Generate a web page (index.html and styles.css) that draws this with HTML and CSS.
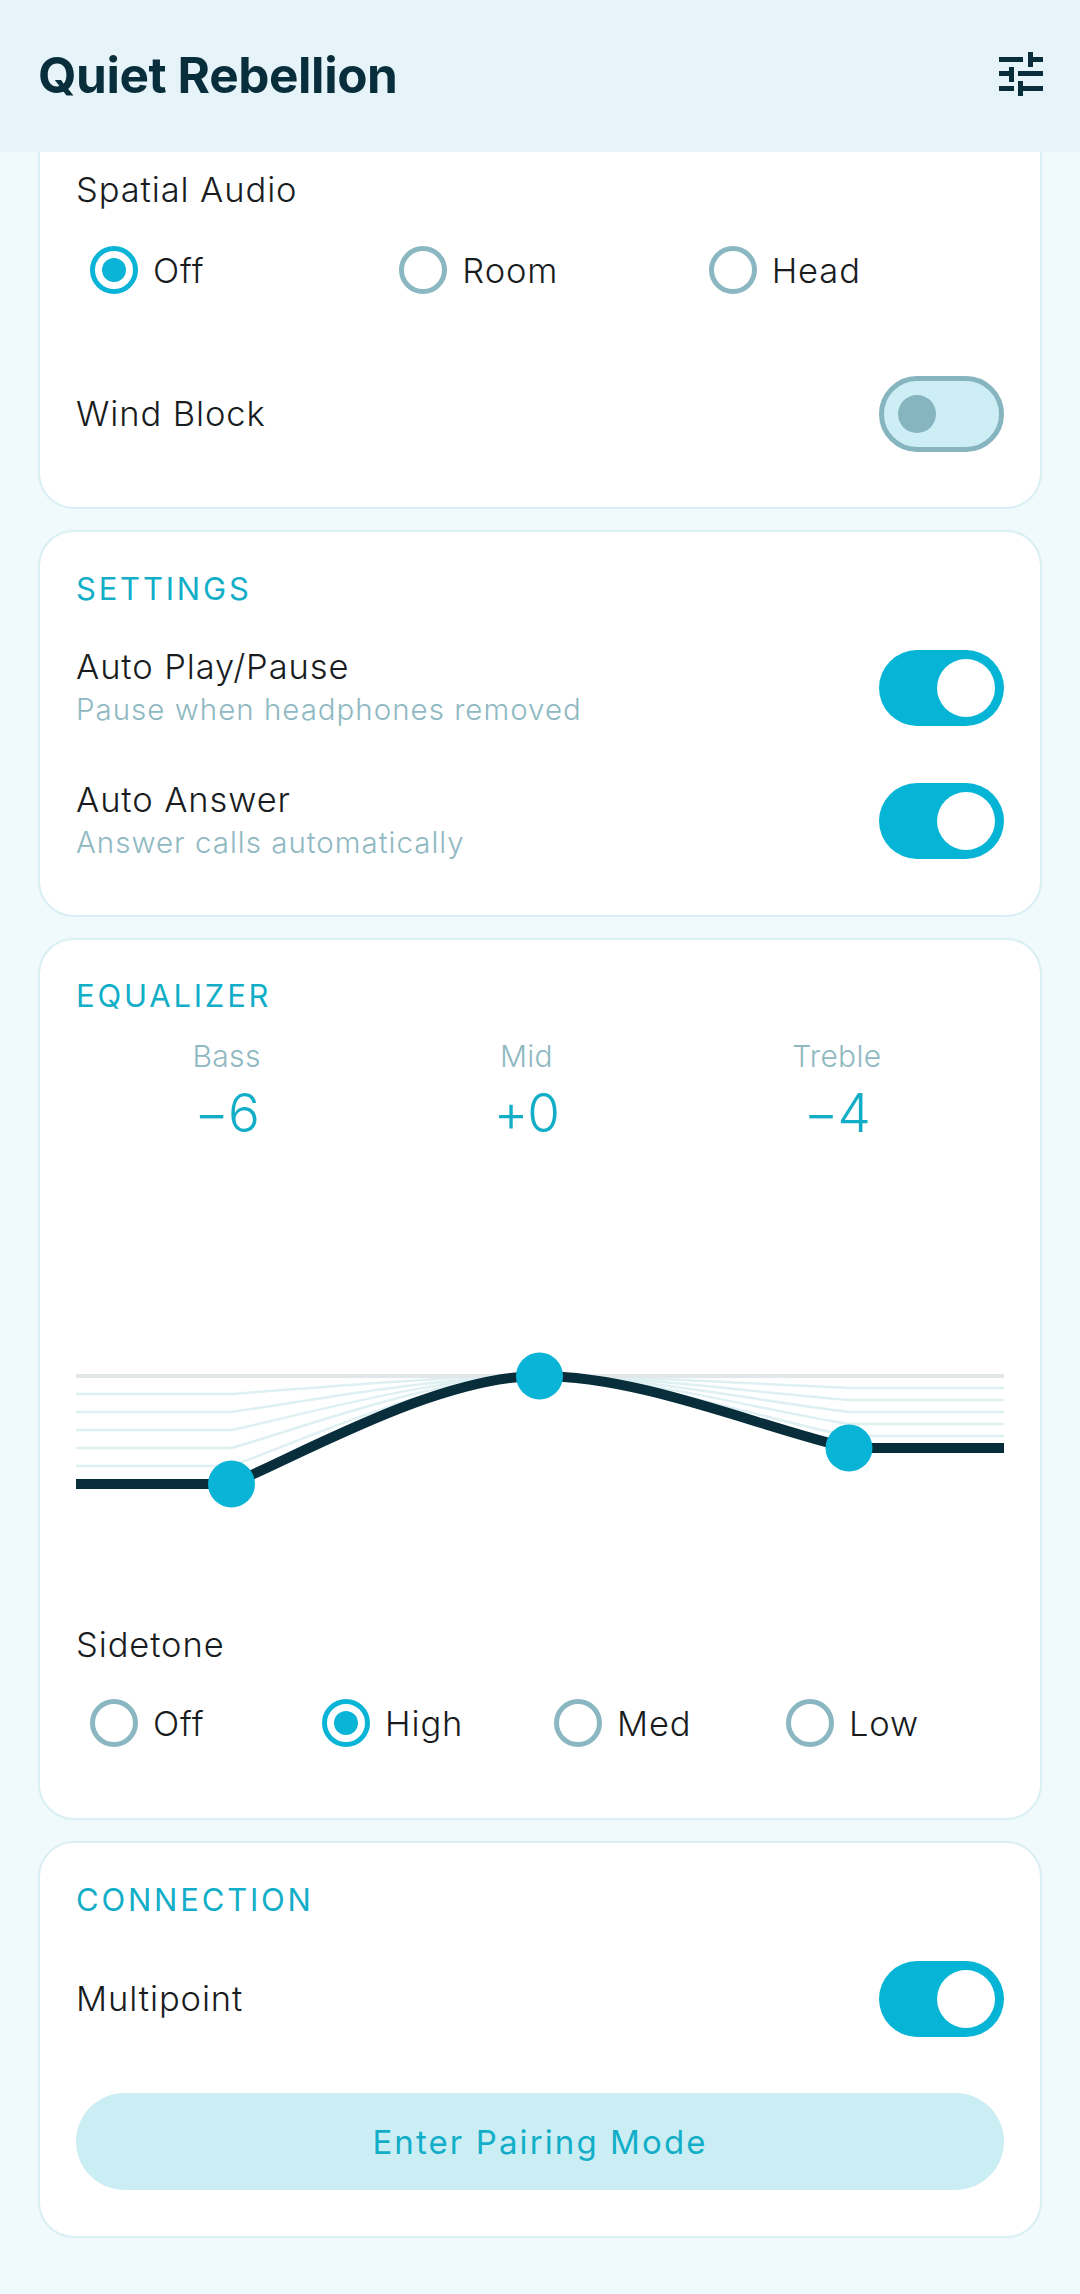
FILE: index.html
```html
<!DOCTYPE html>
<html lang="en">
<head>
    <meta charset="UTF-8">
    <meta name="viewport" content="width=device-width, initial-scale=1.0">
    <link rel="stylesheet" href="styles.css">
    <title>Quiet Rebellion</title>
</head>
<body>
    <header class="topbar">
        <h1 class="app-title">Quiet Rebellion</h1>
        <svg class="tune-icon" width="44" height="44" viewBox="0 0 44 44">
            <path d="M0 5h24v5H0zM29 0h5v15h-5zM34 5h10v5H34zM0 19h10v5H0zM10 15h5v15h-5zM19 19h25v5H19zM0 34h15v5H0zM19 29h5v15h-5zM24 34h20v5H24z"/>
        </svg>
    </header>

    <main class="content">
        <section class="card card-scrolled">
            <div class="label">Spatial Audio</div>
            <div class="radio-group cols-3">
                <div class="radio-item"><span class="radio on"></span>Off</div>
                <div class="radio-item"><span class="radio"></span>Room</div>
                <div class="radio-item"><span class="radio"></span>Head</div>
            </div>
            <div class="row wind-row">
                <div class="label">Wind Block</div>
                <div class="toggle off"><span class="thumb"></span></div>
            </div>
        </section>

        <section class="card card-settings">
            <h2 class="card-heading">SETTINGS</h2>
            <div class="row first-row">
                <div class="row-text">
                    <div class="label">Auto Play/Pause</div>
                    <div class="sublabel">Pause when headphones removed</div>
                </div>
                <div class="toggle"><span class="thumb"></span></div>
            </div>
            <div class="row second-row">
                <div class="row-text">
                    <div class="label">Auto Answer</div>
                    <div class="sublabel">Answer calls automatically</div>
                </div>
                <div class="toggle"><span class="thumb"></span></div>
            </div>
        </section>

        <section class="card card-eq">
            <h2 class="card-heading">EQUALIZER</h2>
            <div class="eq-values">
                <div class="eq-value"><div class="eq-name">Bass</div><div class="eq-num">−6</div></div>
                <div class="eq-value"><div class="eq-name">Mid</div><div class="eq-num">+0</div></div>
                <div class="eq-value"><div class="eq-name">Treble</div><div class="eq-num">−4</div></div>
            </div>
            <svg class="eq-chart" width="928" height="400" viewBox="0 0 928 400">
                <g class="ghost">
                    <path d="M0 214H155.500C234 208.300 364 196 463.500 196C565 196 680 204.300 773 208H928"/>
                    <path d="M0 232H155.500C234 220.700 364 196 463.500 196C565 196 680 212.700 773 220H928"/>
                    <path d="M0 250H155.500C234 233 364 196 463.500 196C565 196 680 221 773 232H928"/>
                    <path d="M0 268H155.500C234 245.300 364 196 463.500 196C565 196 680 229.300 773 244H928"/>
                    <path d="M0 286H155.500C234 257.700 364 196 463.500 196C565 196 680 237.700 773 256H928"/>
                </g>
                <path class="flat" d="M0 196H928"/>
                <path class="curve" d="M0 304H155.500C234 270 364 196 463.500 196C565 196 680 246 773 268H928"/>
                <circle class="knob" cx="155.500" cy="304" r="23.500"/>
                <circle class="knob" cx="463.500" cy="196" r="23.500"/>
                <circle class="knob" cx="773" cy="268" r="23.500"/>
            </svg>
            <div class="label">Sidetone</div>
            <div class="radio-group cols-4">
                <div class="radio-item"><span class="radio"></span>Off</div>
                <div class="radio-item"><span class="radio on"></span>High</div>
                <div class="radio-item"><span class="radio"></span>Med</div>
                <div class="radio-item"><span class="radio"></span>Low</div>
            </div>
        </section>

        <section class="card card-conn">
            <h2 class="card-heading">CONNECTION</h2>
            <div class="row first-row">
                <div class="label">Multipoint</div>
                <div class="toggle"><span class="thumb"></span></div>
            </div>
            <button class="pair-btn" type="button">Enter Pairing Mode</button>
        </section>
    </main>
</body>
</html>
```

FILE: styles.css
```css
* {
    box-sizing: border-box;
}

body {
    margin: 0;
    height: 2294px;
    overflow: hidden;
    background-color: #f0f9fb;
    font-family: "Inter", "Noto Sans", sans-serif;
    color: #191c1e;
}

.topbar {
    height: 152px;
    padding: 0 37px 0 38px;
    background-color: #e6f4fa;
    display: flex;
    align-items: center;
    justify-content: space-between;
}

.app-title {
    margin: 0 0 3px;
    font-size: 49.500px;
    font-weight: 700;
    letter-spacing: -0.4px;
    color: #082e3b;
}

.tune-icon {
    fill: #082e3b;
    margin-top: -4px;
}

.content {
    padding: 0 38px;
    display: flex;
    flex-direction: column;
    gap: 21px;
}

.card {
    background-color: #fff;
    border: 2px solid #d9eff3;
    border-radius: 36px;
    padding: 37px 36px 55px;
}

.card-scrolled {
    border-top: none;
    border-top-left-radius: 0;
    border-top-right-radius: 0;
    padding-top: 18px;
}

.card-settings {
    padding-bottom: 53px;
}

.card-eq {
    padding-top: 36px;
    padding-bottom: 71px;
}

.card-eq .radio-group {
    margin-top: 34px;
}

.card-conn {
    padding-bottom: 46px;
}

.card-heading {
    margin: 0;
    font-size: 31px;
    line-height: 40px;
    font-weight: 400;
    letter-spacing: 2.800px;
    color: #12aec8;
}

.label {
    font-size: 34.500px;
    line-height: 40px;
    font-weight: 300;
    letter-spacing: 0.9px;
}

.sublabel {
    margin-top: 2px;
    font-size: 29.500px;
    line-height: 40px;
    font-weight: 300;
    letter-spacing: 1px;
    color: #8fb9c2;
}

.row {
    display: flex;
    align-items: center;
    justify-content: space-between;
}

.row-text {
    padding-top: 1px;
}

.first-row {
    margin-top: 37px;
}

.second-row {
    margin-top: 50px;
}

.card-conn .first-row {
    margin-top: 41px;
}

.wind-row {
    margin-top: 82px;
}

.radio-group {
    margin-top: 36px;
    display: grid;
}

.cols-3 {
    grid-template-columns: repeat(3, 1fr);
}

.cols-4 {
    grid-template-columns: repeat(4, 1fr);
}

.radio-item {
    padding-left: 14px;
    display: flex;
    align-items: center;
    gap: 15px;
    font-size: 34.500px;
    font-weight: 300;
    letter-spacing: 0.9px;
}

.radio {
    width: 48px;
    height: 48px;
    border: 5px solid #8ab7c1;
    border-radius: 50%;
    display: flex;
    align-items: center;
    justify-content: center;
}

.radio.on {
    border-color: #09b4d6;
}

.radio.on::after {
    content: "";
    width: 24px;
    height: 24px;
    border-radius: 50%;
    background-color: #09b4d6;
}

.toggle {
    width: 125px;
    height: 76px;
    padding: 0 9px;
    border-radius: 38px;
    background-color: #06b4d6;
    display: flex;
    align-items: center;
    justify-content: flex-end;
}

.thumb {
    width: 58px;
    height: 58px;
    border-radius: 50%;
    background-color: #fff;
}

.toggle.off {
    padding: 0 14px;
    border: 5px solid #86b4bf;
    background-color: #cdeef5;
    justify-content: flex-start;
}

.toggle.off .thumb {
    width: 38px;
    height: 38px;
    background-color: #86b4bf;
}

.eq-values {
    margin-top: 22px;
    padding-right: 6px;
    display: flex;
    justify-content: space-around;
    text-align: center;
}

.eq-name {
    font-size: 30px;
    line-height: 36px;
    font-weight: 300;
    letter-spacing: 0.3px;
    color: #8fb9c2;
}

.eq-num {
    margin-top: 11px;
    font-size: 53px;
    line-height: 56px;
    font-weight: 300;
    letter-spacing: -1px;
    color: #12aec8;
}

.eq-chart {
    display: block;
    margin: 39px 0 45px;
}

.eq-chart path {
    fill: none;
}

.ghost path {
    stroke: #dff0f3;
    stroke-width: 2.500;
}

.flat {
    stroke: #e2e7ea;
    stroke-width: 4;
}

.curve {
    stroke: #082e3b;
    stroke-width: 10;
}

.knob {
    fill: #09b4d6;
}

.pair-btn {
    display: block;
    width: 100%;
    height: 97px;
    margin-top: 56px;
    border: none;
    border-radius: 49px;
    background-color: #cbeef5;
    color: #12aec8;
    font-family: inherit;
    font-size: 33px;
    font-weight: 400;
    letter-spacing: 2.100px;
}
```
